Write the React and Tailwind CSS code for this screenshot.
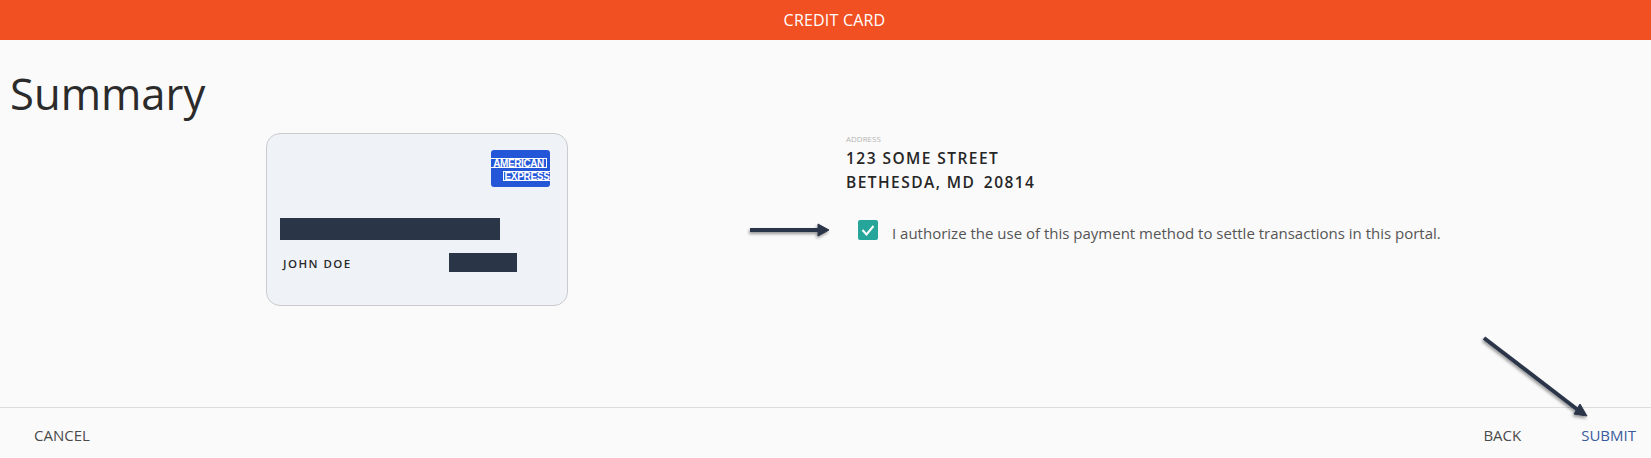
const openSans = { fontFamily: '"Open Sans", sans-serif' };

function AmexLogo() {
  return (
    <div className="w-[59px] h-[37px] rounded-[3px] bg-[#2456d8] flex flex-col items-end pt-[8px] gap-[3px] overflow-hidden font-['Liberation_Sans',sans-serif] text-[10px] font-bold text-white">
      <span className="w-[56px] mr-[3px] h-[10px] leading-[9px] border-y border-r border-white text-center tracking-[-0.4px] whitespace-nowrap">
        AMERICAN
      </span>
      <span className="w-[47px] h-[10px] leading-[9px] border-y border-l border-white text-center tracking-[-0.3px] whitespace-nowrap">
        EXPRESS
      </span>
    </div>
  );
}

function CreditCard() {
  return (
    <div className="w-[302px] h-[173px] ml-[266px] rounded-[14px] border border-[#cbcbce] bg-[#eff2f7] pt-[16px] pl-[13px] pr-[17px]">
      <div className="flex justify-end">
        <AmexLogo />
      </div>
      <div className="mt-[31px] h-[22px] w-[220px] bg-[#2b3548]" />
      <div className="mt-[12px] flex items-center">
        <span className="ml-[3px] pt-[3px] w-[166px] text-[11.5px] font-semibold tracking-[1.45px] text-[#2a2a2a]">JOHN DOE</span>
        <div className="h-[19px] w-[68px] bg-[#2b3548]" />
      </div>
    </div>
  );
}

export default function App() {
  return (
    <div style={openSans} className="relative w-[1651px] h-[458px] overflow-hidden bg-[#fafafa] flex flex-col">
      <header className="h-[40px] shrink-0 bg-[#f15022] flex items-center justify-center pl-[18px] text-white text-[16px] font-medium tracking-[0.2px]">
        CREDIT CARD
      </header>

      <h1 className="pl-[10px] pt-[23px] h-[93px] text-[43.6px] leading-[60px] font-normal text-[#2b2b2b]">Summary</h1>

      <main className="flex-1 flex">
        <CreditCard />
        <section className="ml-[278px]">
          <div className="pt-[1px] text-[8px] leading-[10px] text-[#b5b5b5]">ADDRESS</div>
          <div className="mt-[2px] text-[15.5px] leading-[24px] font-semibold tracking-[1.45px] text-[#262626] whitespace-pre">
            <div>123 SOME STREET</div>
            <div>BETHESDA, MD <span className="ml-[3px]">20814</span></div>
          </div>
          <div className="mt-[26px] ml-[12px] flex items-start gap-[14px]">
            <div className="w-[20px] h-[20px] rounded-[2px] bg-[#26a69a] flex items-center justify-center">
              <svg width="14" height="12" viewBox="0 0 14 12" fill="none" stroke="white" strokeWidth="2">
                <path d="M1.5 6 L5.5 10.5 L12.5 2" />
              </svg>
            </div>
            <span className="pt-[2px] text-[15px] leading-[22px] text-[#555555]">I authorize the use of this payment method to settle transactions in this portal.</span>
          </div>
        </section>
      </main>

      <footer className="h-[51px] shrink-0 border-t border-[#dcdcdc] flex items-center justify-between pt-[5px] pl-[34px] pr-[15px] text-[15px] text-[#4a4a4a]">
        <span>CANCEL</span>
        <div className="flex items-center gap-[60px]">
          <span>BACK</span>
          <span className="text-[#3b5a9d]">SUBMIT</span>
        </div>
      </footer>

      {/* annotation arrows over the page */}
      <svg className="absolute left-0 top-0 pointer-events-none" width="1651" height="458" viewBox="0 0 1651 458">
        <defs>
          <filter id="arrowShadow" x="-20%" y="-50%" width="140%" height="200%">
            <feDropShadow dx="-1" dy="2" stdDeviation="1.5" floodColor="#000" floodOpacity="0.4" />
          </filter>
        </defs>
        <g filter="url(#arrowShadow)" fill="#2b3548" stroke="#2b3548">
          <path d="M750 230 L820 230" strokeWidth="4" fill="none" />
          <path d="M818 224 L829 230 L818 236 Z" strokeWidth="1" />
          <path d="M1484 338 L1578 410" strokeWidth="4" fill="none" />
          <path d="M1580 404 L1587 416 L1574 414 Z" strokeWidth="1" />
        </g>
      </svg>
    </div>
  );
}
